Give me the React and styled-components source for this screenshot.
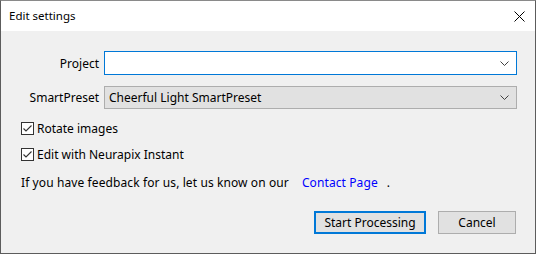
import React from 'react';
import styled, { createGlobalStyle } from 'styled-components';

const GlobalStyle = createGlobalStyle`
  html, body {
    margin: 0;
    padding: 0;
    background: #f0f0f0;
  }
  * {
    box-sizing: border-box;
  }
`;

const Window = styled.div`
  width: 536px;
  height: 254px;
  display: flex;
  flex-direction: column;
  background: #f0f0f0;
  border: 1px solid #5c5c5c;
  border-top-color: #8a8a8a;
  font-family: "Noto Sans", "Liberation Sans", sans-serif;
  font-size: 12px;
  color: #000;
`;

const TitleBar = styled.div`
  height: 30px;
  flex: none;
  display: flex;
  align-items: center;
  justify-content: space-between;
  background: #fff;
  padding: 0 10px 0 8px;
`;

const Title = styled.span`
  font-size: 11.5px;
  margin-top: -1px;
`;

const CloseButton = styled.button`
  width: 12px;
  height: 12px;
  display: grid;
  place-items: center;
  padding: 0;
  border: 0;
  background: transparent;
  color: #000;
`;

const Content = styled.div`
  flex: 1;
  display: flex;
  flex-direction: column;
  padding: 20px 18px 0 0;
`;

const FormGrid = styled.div`
  display: grid;
  grid-template-columns: 98px 1fr;
  column-gap: 5px;
  row-gap: 11px;
  align-items: center;
`;

const Label = styled.label`
  text-align: right;
  white-space: nowrap;
`;

const Combo = styled.div`
  height: ${props => (props.$focused ? '24px' : '23px')};
  display: flex;
  align-items: center;
  justify-content: space-between;
  padding: 0 7px 0 4px;
  background: ${props => (props.$focused ? '#fff' : '#e1e1e1')};
  border: 1px solid ${props => (props.$focused ? '#0078d7' : '#adadad')};
  font-size: 12px;
`;

const Chevron = () => (
  <svg width="9" height="5" viewBox="0 0 9 5" fill="none">
    <path d="M0.5 0.5 L4.5 4.5 L8.5 0.5" stroke="#404040" strokeWidth="1" />
  </svg>
);

const Options = styled.div`
  display: flex;
  flex-direction: column;
  gap: 13px;
  padding: 13px 0 0 20px;
`;

const CheckRow = styled.label`
  display: flex;
  align-items: center;
  gap: 3px;
  height: 13px;
`;

const Box = styled.span`
  width: 13px;
  height: 13px;
  display: grid;
  place-items: center;
  background: #fff;
  border: 1px solid #333;
`;

const CheckMark = () => (
  <svg width="11" height="11" viewBox="0 0 11 11" fill="none">
    <path d="M1.5 5.5 L4 8 L9.5 2.5" stroke="#333" strokeWidth="1.1" />
  </svg>
);

const Feedback = styled.p`
  margin: 0;
  display: flex;
  align-items: center;
  white-space: nowrap;
  letter-spacing: 0.1px;
`;

const Link = styled.a`
  color: #0000ff;
  text-decoration: none;
  margin: 0 9px 0 13px;
`;

const Footer = styled.div`
  display: flex;
  justify-content: flex-end;
  gap: 12px;
  padding: 0 1px 0 0;
  margin-top: 20px;
`;

const Button = styled.button`
  height: 23px;
  min-width: ${props => props.$width}px;
  padding: 0 8px;
  background: #e1e1e1;
  border: ${props => (props.$primary ? '2px solid #0078d7' : '1px solid #adadad')};
  font-family: "Noto Sans", "Liberation Sans", sans-serif;
  font-size: 12px;
  color: #000;
`;

function Checkbox({ label }) {
  return (
    <CheckRow>
      <Box>
        <CheckMark />
      </Box>
      {label}
    </CheckRow>
  );
}

export default function App() {
  return (
    <>
      <GlobalStyle />
      <Window>
        <TitleBar>
          <Title>Edit settings</Title>
          <CloseButton type="button" aria-label="Close">
            <svg width="11" height="11" viewBox="0 0 11 11">
              <path d="M0.5 0.5 L10.5 10.5 M10.5 0.5 L0.5 10.5" stroke="#000" strokeWidth="1" />
            </svg>
          </CloseButton>
        </TitleBar>
        <Content>
          <FormGrid>
            <Label>Project</Label>
            <Combo $focused>
              <span />
              <Chevron />
            </Combo>
            <Label>SmartPreset</Label>
            <Combo>
              <span>Cheerful Light SmartPreset</span>
              <Chevron />
            </Combo>
          </FormGrid>
          <Options>
            <Checkbox label="Rotate images" />
            <Checkbox label="Edit with Neurapix Instant" />
            <Feedback>
              If you have feedback for us, let us know on our
              <Link href="#">Contact Page</Link>.
            </Feedback>
          </Options>
          <Footer>
            <Button type="button" $primary $width={112}>Start Processing</Button>
            <Button type="button" $width={78}>Cancel</Button>
          </Footer>
        </Content>
      </Window>
    </>
  );
}
